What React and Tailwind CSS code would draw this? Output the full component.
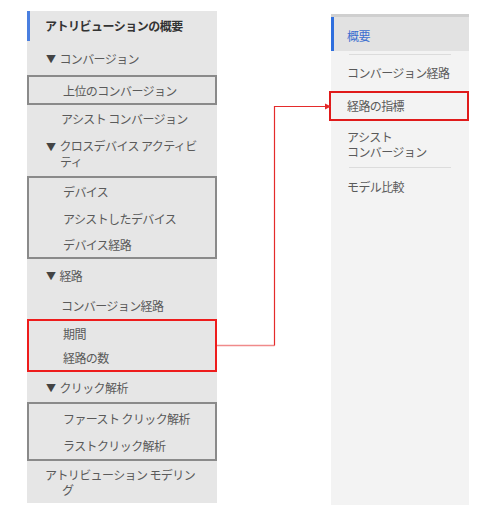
import React from 'react';

const font = { fontFamily: '"Noto Sans CJK JP", "Noto Sans", sans-serif' };

const Tri = () => <span className="text-[10px] mr-[4px] text-[#444]">▼</span>;

// one plain row of the left menu
const Row = ({ h, indent = 'pl-[34px]', children }) => (
  <div className={`flex items-center ${indent} ${h} text-[12px] tracking-[-0.6px] text-[#5a5a5a] leading-[15px]`}>
    {children}
  </div>
);

const Group = ({ border, children }) => (
  <div className={`border-2 ${border} flex flex-col`}>{children}</div>
);

const LeftMenu = () => (
  <div className="w-[190px] h-[492px] bg-[#e6e6e6] flex flex-col shrink-0">
    <div className="h-[30px] flex items-center border-l-[3px] border-[#4a7fe0] pl-[15px] text-[12px] tracking-[-0.5px] font-bold text-[#333]">
      アトリビューションの概要
    </div>
    <Row h="h-[34px]" indent="pl-[19px]"><Tri />コンバージョン</Row>
    <Group border="border-[#8a8a8a]">
      <Row h="h-[26px]">上位のコンバージョン</Row>
    </Group>
    <Row h="h-[26px]">アシスト コンバージョン</Row>
    <div className="h-[45px] flex flex-col justify-center pl-[19px] text-[12px] tracking-[-0.6px] text-[#5a5a5a] leading-[15px]">
      <span><Tri />クロスデバイス アクティビ</span>
      <span className="pl-[14px]">ティ</span>
    </div>
    <Group border="border-[#8a8a8a]">
      <Row h="h-[27px]">デバイス</Row>
      <Row h="h-[27px]">アシストしたデバイス</Row>
      <Row h="h-[25px]">デバイス経路</Row>
    </Group>
    <Row h="h-[32px]" indent="pl-[19px]"><Tri />経路</Row>
    <Row h="h-[28px]">コンバージョン経路</Row>
    <Group border="border-[#ee1c1c]">
      <Row h="h-[24px]">期間</Row>
      <Row h="h-[25px]">経路の数</Row>
    </Group>
    <Row h="h-[30px]" indent="pl-[19px]"><Tri />クリック解析</Row>
    <Group border="border-[#8a8a8a]">
      <Row h="h-[28px]">ファースト クリック解析</Row>
      <Row h="h-[27px]">ラストクリック解析</Row>
    </Group>
    <div className="h-[42px] flex flex-col justify-center pl-[18px] text-[12px] tracking-[-0.6px] text-[#5a5a5a] leading-[15px]">
      <span>アトリビューション モデリン</span>
      <span className="pl-[17px]">グ</span>
    </div>
  </div>
);

const Divider = () => (
  <div className="h-[1px] mx-[18px] bg-[#dcdcdc]" />
);

const RightMenu = () => (
  <div className="w-[138px] h-[491px] bg-[#f3f3f3] border-t-[3px] border-[#cfcfcf] flex flex-col shrink-0 text-[12px] tracking-[-0.6px]">
    <div className="h-[34px] bg-[#e2e2e2] border-l-[3px] border-[#2f6fde] flex items-center pl-[13px] pt-[3px] text-[#3b6fd0]">
      概要
    </div>
    <div className="h-[3px]" />
    <Divider />
    <div className="h-[36px] flex items-center pl-[16px] text-[#5a5a5a]">コンバージョン経路</div>
    <div className="h-[30px] -ml-[2px] border-2 border-[#e01a1a] flex items-center pl-[16px] text-[#5a5a5a]">
      経路の指標
    </div>
    <div className="h-[46px] flex flex-col justify-center pl-[16px] text-[#5a5a5a] leading-[15px]">
      <span>アシスト</span>
      <span>コンバージョン</span>
    </div>
    <Divider />
    <div className="h-[38px] flex items-center pl-[16px] text-[#5a5a5a]">モデル比較</div>
  </div>
);

export default function App() {
  return (
    <div className="relative w-[500px] h-[520px] bg-white" style={font}>
      <div className="flex items-start pl-[27px] pt-[11px]">
        <LeftMenu />
        <div className="w-[114px] shrink-0" />
        <div className="mt-[3px]">
          <RightMenu />
        </div>
      </div>
      {/* connector arrow */}
      <svg className="absolute inset-0 pointer-events-none" width="500" height="520">
        <polyline points="217,345.5 274.5,345.5" fill="none" stroke="#f08a8a" strokeWidth="1.5" />
        <polyline points="274.5,345.5 274.5,106.5 326,106.5" fill="none" stroke="#e42b2b" strokeWidth="1.2" />
        <polygon points="325,103.5 331,106.5 325,109.5" fill="#e42b2b" />
      </svg>
    </div>
  );
}
